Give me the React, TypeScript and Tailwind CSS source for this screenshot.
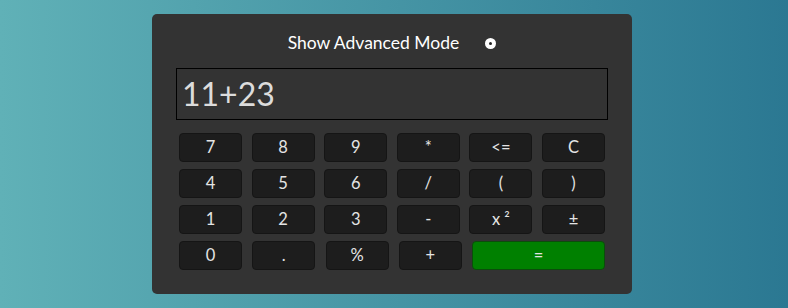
const rows = [
  ["7", "8", "9", "*", "<=", "C"],
  ["4", "5", "6", "/", "(", ")"],
  ["1", "2", "3", "-", "x ²", "±"],
];

const btn =
  "h-[29px] rounded-[4px] border border-[#151515] bg-[#1d1d1d] text-[#e4e4e4] text-[16.5px] flex items-center justify-center";

export default function App() {
  return (
    <div className="w-[788px] h-[308px] bg-[linear-gradient(to_right,#60b1b7,#2b7892)] pt-[14px] font-['Lato',sans-serif]">
      <div className="ml-[152px] w-[480px] h-[280px] rounded-[5px] bg-[#333333] px-[24px] pt-[18px]">
        <div className="flex items-center justify-center gap-[26px] h-[22px]">
          <span className="text-[17.5px] text-white">Show Advanced Mode</span>
          <span className="w-[11px] h-[11px] rounded-full bg-white flex items-center justify-center">
            <span className="w-[3px] h-[3px] rounded-full bg-[#222] -ml-[1px]" />
          </span>
        </div>
        <div className="mt-[14px] h-[52px] border border-black bg-[#333333] flex items-center px-[5px] text-[32px] text-[#dcdcdc]">
          11+23
        </div>
        <div className="mx-[3px] mt-[13px] flex flex-col gap-[7px]">
          {rows.map((r, i) => (
            <div key={i} className="grid grid-cols-6 gap-x-[9.6px]">
              {r.map((k) => (
                <div key={k} className={btn}>
                  {k}
                </div>
              ))}
            </div>
          ))}
          <div className="flex gap-[10.25px]">
            {["0", ".", "%", "+"].map((k) => (
              <div key={k} className={`${btn} w-[63px]`}>
                {k}
              </div>
            ))}
            <div className="flex-1 h-[29px] rounded-[4px] border border-[#0b4d0b] bg-[#008000] text-[#e4e4e4] text-[16.5px] flex items-center justify-center">
              =
            </div>
          </div>
        </div>
      </div>
    </div>
  );
}
